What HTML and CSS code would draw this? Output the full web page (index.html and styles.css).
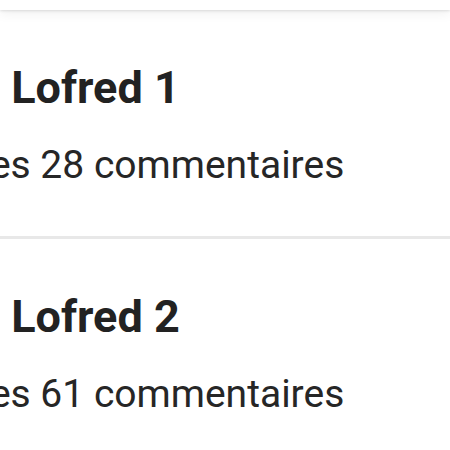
FILE: index.html
```html
<!DOCTYPE html>
<html lang="fr">
<head>
    <meta charset="UTF-8">
    <meta name="viewport" content="width=device-width, initial-scale=1.0">
    <title>Le blog de Lofred</title>
    <link rel="stylesheet" href="styles.css">
</head>

<body>
    <!-- Barre du haut -->
    <div class="topbar"></div>

    <!-- Liste des articles -->
    <div class="feed">
        <div class="card">
            <div class="card-body">
                <div class="card-title">Le blog de Lofred 1</div>
                <div class="card-meta">Il y a 2 heures 28 commentaires</div>
            </div>
        </div>
        <div class="card">
            <div class="card-body">
                <div class="card-title">Le blog de Lofred 2</div>
                <div class="card-meta">Il y a 5 heures 61 commentaires</div>
            </div>
        </div>
    </div>
</body>

</html>
```
FILE: styles.css
```css
/* Général */
body {
    font-family: Roboto, "Noto Sans", Arial, sans-serif;
    background-color: #fff;
    margin: 0;
    padding: 0;
    overflow: hidden;
}

/* Barre du haut */
.topbar {
    position: relative;
    z-index: 1;
    height: 10px;
    background-color: #fff;
    box-shadow: 0 1px 3px rgba(0, 0, 0, 0.12), 0 4px 12px rgba(0, 0, 0, 0.06);
}

/* Cartes */
.card {
    background-color: #fff;
    padding: 52px 0 48px;
    border-bottom: 3px solid #e8e8e8;
}

.card-body {
    margin-left: -209px;
    white-space: nowrap;
}

.card-title {
    font-size: 45px;
    line-height: 52px;
    font-weight: bold;
    color: #222;
}

.card-meta {
    margin-top: 28px;
    padding-left: 2px;
    font-size: 39px;
    line-height: 46px;
    color: #262626;
}
```
